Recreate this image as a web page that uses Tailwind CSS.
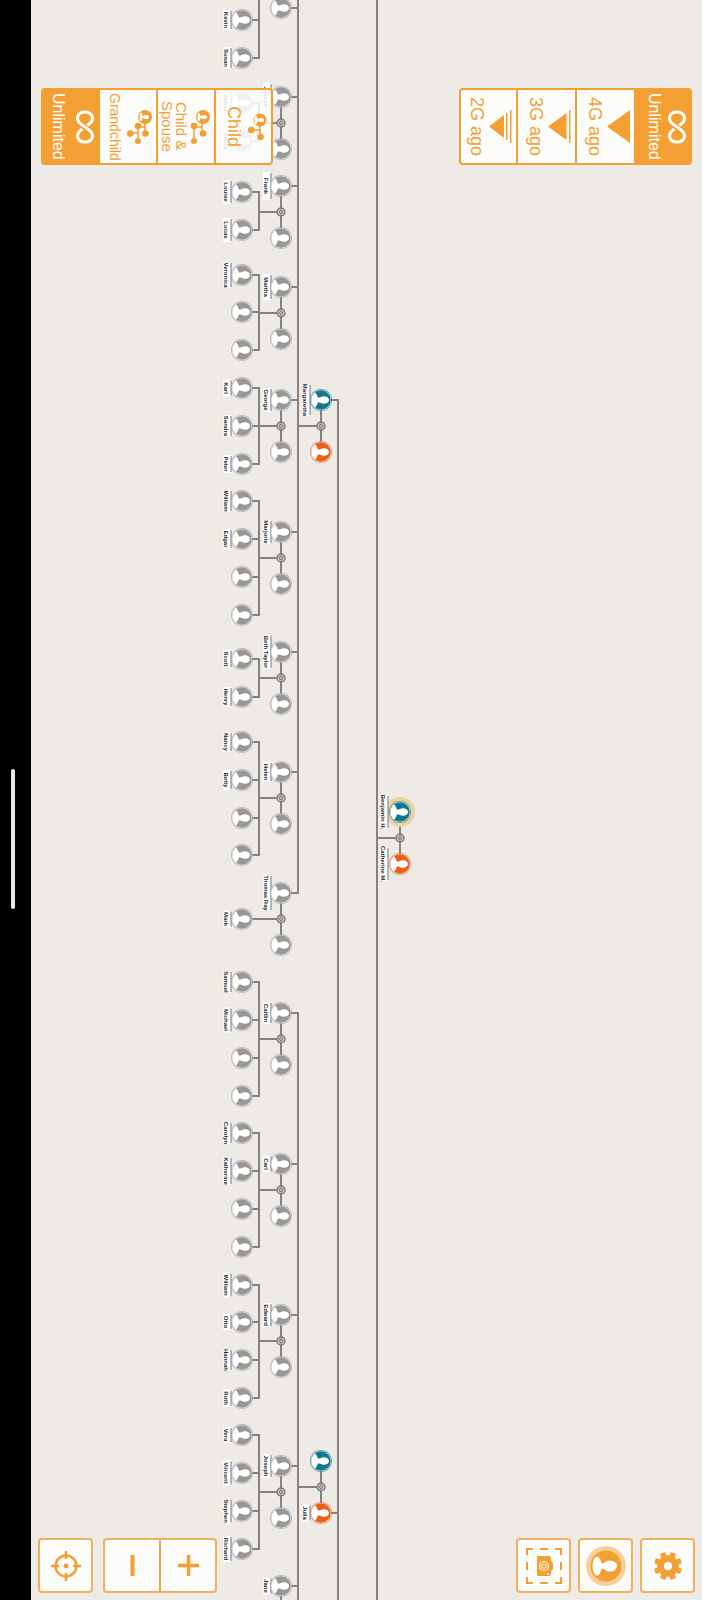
<!DOCTYPE html>
<html lang="en">
<head>
<meta charset="utf-8">
<meta name="viewport" content="width=device-width, initial-scale=1">
<title>Family tree</title>
<script src="https://cdn.jsdelivr.net/npm/@tailwindcss/browser@4"></script>
</head>
<body class="bg-[#eeebe6]">
<div class="relative flex min-h-screen overflow-hidden font-['Liberation_Sans',sans-serif] text-[#f39f33]">

  <!-- Device edge with the home indicator -->
  <aside class="relative z-10 flex w-[31px] shrink-0 items-center bg-black pt-[77px] pl-[11px]">
    <div class="h-[140px] w-1 rounded-full bg-[#e8e8e8]"></div>
  </aside>

  <!-- Tree canvas -->
  <svg id="tree" class="absolute inset-0 h-full w-full" role="img" aria-label="Family tree">
    <defs>
      <clipPath id="disc"><circle r="9.700"/></clipPath>
      <g id="bust" fill="#fff" clip-path="url(#disc)">
        <ellipse cx="-7" rx="4" ry="7.500"/>
        <path d="M-5-2.500H0V2.500H-5Z"/>
        <ellipse cx="3" rx="5" ry="3.800"/>
      </g>
      <g id="union">
        <circle r="4" fill="#c2c0bd" stroke="#7d7b79" stroke-width="1.400"/>
        <ellipse rx="1.400" ry="2" fill="none" stroke="#777"/>
      </g>
    </defs>
  </svg>

  <main class="relative flex flex-1 flex-col justify-between">
    <header class="flex justify-between pt-[88px] pr-[10px] pl-[10px]">
      <nav aria-label="Descendants" class="flex h-[77px] overflow-hidden rounded border-2 border-[#f39f33] bg-white/85">
        <button class="flex w-[55px] flex-col items-center bg-[#f39f33] pr-1 text-base/5 whitespace-nowrap text-white [writing-mode:vertical-rl]">
          <svg class="h-[34px] w-[18px]" viewBox="0 0 18 34" fill="none" stroke="currentColor" stroke-width="3"><path d="M13 14C19 10 17 2 9 2C1 2-1 10 5 14L13 20C19 24 17 32 9 32C1 32-1 24 5 20L6.500 19M11.500 15.500L13 14"/></svg>
          <span class="mr-2">Unlimited</span>
        </button>
        <button class="flex w-[58px] flex-col items-center border-l-2 border-[#f39f33] pr-1 text-sm/4 whitespace-nowrap [writing-mode:vertical-rl]">
          <svg class="h-[34px] w-[25px]" viewBox="0 0 25 34" fill="none" stroke="currentColor" stroke-width="1.500"><path d="M18 12V23M18 17H11M11 15V30M11 23H3"/><g fill="currentColor" stroke="none"><circle cx="18" cy="7" r="7"/><circle cx="18.500" cy="23.500" r="3.300"/><circle cx="11" cy="16" r="3.300"/><circle cx="11" cy="31" r="3"/><circle cx="3.300" cy="23.500" r="3.300"/></g><g fill="#fff" stroke="none"><ellipse cx="14" cy="7" rx="1.500" ry="4"/><path d="M14 6H18V8H14Z"/><ellipse cx="19" cy="7" rx="3" ry="2"/></g></svg>
          <span class="mr-1">Grandchild</span>
        </button>
        <button class="flex w-[58px] flex-col items-center border-l-2 border-[#f39f33] pr-1 text-[15px]/[14px] whitespace-nowrap [writing-mode:vertical-rl]">
          <svg class="h-[34px] w-[20px]" viewBox="0 0 20 34" fill="none" stroke="currentColor" stroke-width="1.500"><path d="M12 12V23M12 17H4M4 15V30"/><g fill="currentColor" stroke="none"><circle cx="13" cy="7" r="7"/><circle cx="13" cy="23.500" r="3.300"/><circle cx="4" cy="16" r="3.300"/><circle cx="4" cy="31" r="3"/></g><g fill="#fff" stroke="none"><ellipse cx="9" cy="7" rx="1.500" ry="4"/><path d="M9 6H13V8H9Z"/><ellipse cx="14" cy="7" rx="3" ry="2"/></g></svg>
          <span class="mr-0.5">Child &amp;<br>Spouse</span>
        </button>
        <button class="flex w-[57px] flex-col items-center border-l-2 border-[#f39f33] pr-1 text-lg/5 whitespace-nowrap [writing-mode:vertical-rl]">
          <svg class="h-[28px] w-[19px]" viewBox="0 0 19 28" fill="none" stroke="currentColor" stroke-width="1.500"><path d="M12 12V23M12 17H3"/><g fill="currentColor" stroke="none"><circle cx="12" cy="7" r="6.500"/><circle cx="12.500" cy="24" r="3.300"/><circle cx="3.300" cy="17" r="3.300"/></g><g fill="#fff" stroke="none"><ellipse cx="8" cy="7" rx="1.500" ry="4"/><path d="M8 6H12V8H8Z"/><ellipse cx="13" cy="7" rx="3" ry="2"/></g></svg>
          <span class="mr-1">Child</span>
        </button>
      </nav>

      <nav aria-label="Ancestors" class="flex h-[77px] overflow-hidden rounded border-2 border-[#f39f33] bg-white/85">
        <button class="flex w-[55px] flex-col items-center pr-1 text-lg/5 whitespace-nowrap [writing-mode:vertical-rl]">
          <svg class="h-[33px] w-[23px]" viewBox="0 0 23 33" fill="currentColor"><path d="M0 16.500L15 5V28ZM17 3H18.500V30H17ZM21 0H22.500V33H21Z"/></svg>
          <span class="mr-0.5">2G ago</span>
        </button>
        <button class="flex w-[59px] flex-col items-center border-l-2 border-[#f39f33] pr-1 text-lg/5 whitespace-nowrap [writing-mode:vertical-rl]">
          <svg class="h-[33px] w-[23px]" viewBox="0 0 23 33" fill="currentColor"><path d="M0 16.500L18.500 3V30ZM21 0H22.500V33H21Z"/></svg>
          <span class="mr-0.5">3G ago</span>
        </button>
        <button class="flex w-[59px] flex-col items-center border-l-2 border-[#f39f33] pr-1 text-lg/5 whitespace-nowrap [writing-mode:vertical-rl]">
          <svg class="h-[33px] w-[23px]" viewBox="0 0 23 33" fill="currentColor"><path d="M0 16.500L23 0V33Z"/></svg>
          <span class="mr-0.5">4G ago</span>
        </button>
        <button class="flex w-[56px] flex-col items-center bg-[#f39f33] pr-1 text-base/5 whitespace-nowrap text-white [writing-mode:vertical-rl]">
          <svg class="h-[34px] w-[18px]" viewBox="0 0 18 34" fill="none" stroke="currentColor" stroke-width="3"><path d="M13 14C19 10 17 2 9 2C1 2-1 10 5 14L13 20C19 24 17 32 9 32C1 32-1 24 5 20L6.500 19M11.500 15.500L13 14"/></svg>
          <span class="mr-1">Unlimited</span>
        </button>
      </nav>
    </header>

    <footer class="flex justify-between pr-[7px] pb-[7px] pl-[7px]">
      <div class="flex gap-[10px]">
        <button aria-label="Center" class="flex size-[55px] items-center justify-center rounded border-2 border-[#f3b05c] bg-white/85">
          <svg class="size-[30px]" viewBox="-15 -15 30 30" fill="none" stroke="currentColor" stroke-width="2.500"><circle r="10.500"/><path d="M0-15V-7M0 15V7M-15 0H-7M15 0H7"/><circle r="2.500" fill="currentColor" stroke="none"/></svg>
        </button>
        <div class="flex rounded border-2 border-[#f3b05c] bg-white/85">
          <button aria-label="Zoom out" class="flex h-[51px] w-[54px] items-center justify-center">
            <svg class="size-[21px]" viewBox="0 0 21 21" stroke="currentColor" stroke-width="4"><path d="M10.500 0V21"/></svg>
          </button>
          <button aria-label="Zoom in" class="flex h-[51px] w-[56px] items-center justify-center border-l-2 border-[#f3a64a]">
            <svg class="size-[21px]" viewBox="0 0 21 21" stroke="currentColor" stroke-width="3.500"><path d="M10.500 0V21M0 10.500H21"/></svg>
          </button>
        </div>
      </div>
      <div class="flex gap-[7px]">
        <button aria-label="Screenshot" class="flex size-[55px] items-center justify-center rounded border-2 border-[#f3b05c] bg-white/85">
          <svg class="size-[36px]" viewBox="-18 -18 36 36" fill="none" stroke="currentColor" stroke-width="2"><path d="M-17-11V-17H-11M11-17H17V-11M17 11V17H11M-11 17H-17V11M-4-17H4M-4 17H4M-17-4V4M17-4V4"/><path d="M-7-9Q-7-10-6-10H5Q7-10 7-8V-5L9-3V3L7 5V8Q7 10 5 10H-6Q-7 10-7 9Z" fill="currentColor" stroke="none"/><circle r="4.500" stroke="#fff" stroke-width="1.200"/><circle r="2.300" stroke="#fff" stroke-width="1"/><circle cx="4" cy="8" r="1" fill="#fff" stroke="none"/></svg>
        </button>
        <button aria-label="Person" class="flex size-[55px] items-center justify-center rounded border-2 border-[#f3b05c] bg-white/85">
          <svg class="size-[40px]" viewBox="-20 -20 40 40"><circle r="20" fill="#f8cf9b"/><circle r="15.500" fill="#f39f33"/><g fill="#fff"><ellipse cx="-9" rx="4.500" ry="9.500"/><path d="M-7-4Q-4-2 0-3V3Q-4 2-7 4Z"/><ellipse cx="4" rx="7" ry="5.500"/></g></svg>
        </button>
        <button aria-label="Settings" class="flex size-[55px] items-center justify-center rounded border-2 border-[#f3b05c] bg-white/85">
          <svg class="size-[30px]" viewBox="-15 -15 30 30" fill="none" stroke="currentColor"><circle r="7.500" stroke-width="6.500"/><g stroke-width="5.500" stroke-linejoin="round"><path d="M5.400-13L4-9M-5.400-13L-4-9M5.400 13L4 9M-5.400 13L-4 9M13-5.400L9-4M13 5.400L9 4M-13-5.400L-9-4M-13 5.400L-9 4"/></g></svg>
        </button>
      </div>
    </footer>
  </main>
</div>

<script>
const X = { child: 242, childBus: 259, parent: 281, parentBus: 298, grand: 321, grandBus: 338, rootBus: 377, root: 400 };
const GREY = '#989898', TEAL = '#10788f', ORANGE = '#ea611b';
let lines = '', nodes = '';
const line = (x1, y1, x2, y2) => { lines += `<path d="M${x1} ${y1}L${x2} ${y2}"/>`; };
const person = (x, y, color) => {
  nodes += `<g transform="translate(${x} ${y})"><circle r="11" fill="${color}" opacity=".65"/><circle r="10.300" fill="#e4e2df"/><circle r="9.700" fill="${color}"/><use href="#bust"/></g>`;
};
const union = (x, y) => { nodes += `<use href="#union" x="${x}" y="${y}"/>`; };
// Name tag: reads downwards, centred on y
const tag = (x, y, length, name) => {
  nodes += `<g transform="translate(${x} ${y}) rotate(90)"><rect x="${-length / 2}" y="-4" width="${length}" height="8" rx="1" fill="#fff"/><path d="M${-length / 2 + 1} -4H${length / 2 - 1}" stroke="#777" stroke-width="1"/><text y="3" text-anchor="middle" font-size="6" font-weight="bold" fill="#222">${name}</text></g>`;
};
// [name, tag length, parent y, [[child y, name, tag length], ...]]
const families = [
  ['', 0, 8, [[-18], [20, 'Kevin', 20], [58, 'Susan', 22]]],
  ['Joseph', 28, 97, [[103, 'James', 24], [141, 'Laura', 24]]],
  ['Frank', 28, 186, [[192, 'Louise', 24], [230, 'Lucas', 24]]],
  ['Martha', 26, 287, [[275, 'Veronica', 26], [312], [350]]],
  ['George', 24, 400, [[388, 'Karl', 17], [426, 'Sandra', 22], [464, 'Peter', 18]]],
  ['Marjorie', 24, 532, [[501, 'William', 22], [539, 'Edgar', 20], [577], [615]]],
  ['Beth Taylor', 34, 652, [[659, 'Scott', 18], [697, 'Henry', 20]]],
  ['Helen', 20, 772, [[742, 'Nancy', 20], [780, 'Betty', 20], [818], [855]]],
  ['Thomas Ray', 36, 893, [[919, 'Mark', 17]]],
  ['Caitlin', 22, 1013, [[982, 'Samuel', 22], [1020, 'Michael', 25], [1058], [1096]]],
  ['Carl', 17, 1164, [[1133, 'Carolyn', 22], [1171, 'Katherine', 28], [1209], [1247]]],
  ['Edward', 24, 1315, [[1285, 'William', 25], [1322, 'Otto', 16], [1360, 'Hannah', 22], [1398, 'Ruth', 17]]],
  ['Joseph', 24, 1466, [[1435, 'Vera', 16], [1473, 'Vincent', 25], [1511, 'Stephen', 25], [1549, 'Richard', 26]]],
  ['Jane', 17, 1586, []]
];
for (const [name, length, y, children] of families) {
  const middle = y + 26;
  line(X.parent, y, X.parentBus, y);
  if (y > 8) line(X.parent, y, X.parent, y + 52);
  if (children.length && y > 8) line(X.childBus, middle, X.parent, middle);
  if (children.length > 1) line(X.childBus, children[0][0] - 1, X.childBus, children[children.length - 1][0] + 1);
  if (children.length === 1) line(X.child, middle, X.childBus, middle);
  for (const [cy, childName, childLength] of children) {
    line(X.child, cy, X.childBus, cy);
    if (childName) tag(227, cy, childLength, childName);
    person(X.child, cy, GREY);
  }
  if (name) tag(267, y, length, name);
  person(X.parent, y, GREY);
  if (y > 8) { union(X.parent, middle); person(X.parent, y + 52, GREY); }
}
line(X.parentBus, 0, X.parentBus, 894);
line(X.parentBus, 1012, X.parentBus, 1600);
line(X.grandBus, 399, X.grandBus, 1600);
line(X.rootBus, 0, X.rootBus, 1600);
for (const [x, bus, y] of [[X.grand, X.parentBus, 400], [X.grand, X.parentBus, 1461], [X.root, X.rootBus, 812]]) {
  line(x, y, x, y + 52);
  line(bus, y + 26, x, y + 26);
  if (x === X.root) nodes += `<circle cx="${x}" cy="${y}" r="15" fill="#ebd1a4"/>`;
  union(x, y + 26);
}
line(X.grand, 400, X.grandBus, 400);
line(X.grand, 1513, X.grandBus, 1513);
tag(306, 400, 32, 'Margaretha');
tag(306, 1513, 17, 'Julia');
tag(384, 812, 34, 'Benjamin H.');
tag(384, 864, 34, 'Catherine M.');
person(X.grand, 400, TEAL);
person(X.grand, 452, ORANGE);
person(X.grand, 1461, TEAL);
person(X.grand, 1513, ORANGE);
person(X.root, 812, TEAL);
person(X.root, 864, ORANGE);
document.getElementById('tree').insertAdjacentHTML('beforeend', `<g stroke="#858381" stroke-width="2">${lines}</g>${nodes}`);
</script>
</body>
</html>
